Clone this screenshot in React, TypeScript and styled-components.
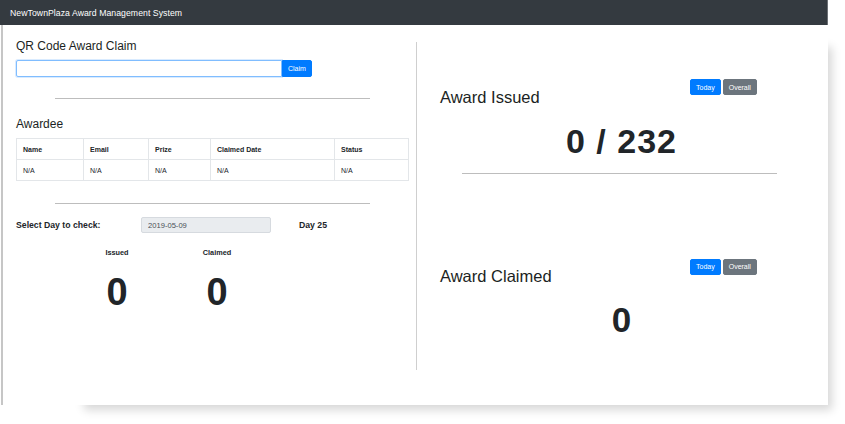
import styled, { createGlobalStyle } from "styled-components";

const GlobalStyle = createGlobalStyle`
  html, body {
    margin: 0;
    padding: 0;
    background: #ffffff;
  }
  body {
    font-family: "Liberation Sans", Arial, sans-serif;
    color: #212529;
  }
`;

const rows = [{ name: "N/A", email: "N/A", prize: "N/A", date: "N/A", status: "N/A" }];

const App = () => {
  return (
    <Stage>
      <GlobalStyle />
      <Backdrop />
      <Frame>
        <NavBar>NewTownPlaza Award Management System</NavBar>
        <Body>
          <LeftColumn>
            <SectionTitle>QR Code Award Claim</SectionTitle>
            <ClaimGroup>
              <ClaimInput type="text" />
              <PrimaryButton $size="md">Claim</PrimaryButton>
            </ClaimGroup>
            <Rule $top={21} />
            <SectionTitle $top={18}>Awardee</SectionTitle>
            <Table>
              <thead>
                <tr>
                  <Th $w={67}>Name</Th>
                  <Th $w={65}>Email</Th>
                  <Th $w={62}>Prize</Th>
                  <Th $w={124}>Claimed Date</Th>
                  <Th>Status</Th>
                </tr>
              </thead>
              <tbody>
                {rows.map((r, i) => (
                  <tr key={i}>
                    <Td>{r.name}</Td>
                    <Td>{r.email}</Td>
                    <Td>{r.prize}</Td>
                    <Td>{r.date}</Td>
                    <Td>{r.status}</Td>
                  </tr>
                ))}
              </tbody>
            </Table>
            <Rule $top={22} />
            <DayRow>
              <DayLabel>Select Day to check:</DayLabel>
              <DateField>2019-05-09</DateField>
              <DayLabel $indent={28}>Day 25</DayLabel>
            </DayRow>
            <StatGrid>
              <Stat>
                <StatLabel>Issued</StatLabel>
                <StatValue>0</StatValue>
              </Stat>
              <Stat>
                <StatLabel>Claimed</StatLabel>
                <StatValue>0</StatValue>
              </Stat>
            </StatGrid>
          </LeftColumn>
          <RightColumn>
            <CardHeader $top={37}>
              <BigTitle>Award Issued</BigTitle>
              <ToggleGroup>
                <PrimaryButton $size="sm">Today</PrimaryButton>
                <SecondaryButton>Overall</SecondaryButton>
              </ToggleGroup>
            </CardHeader>
            <BigNumber $size={34} $spacing={1} $top={17}>0 / 232</BigNumber>
            <WideRule />
            <CardHeader $top={85}>
              <BigTitle>Award Claimed</BigTitle>
              <ToggleGroup>
                <PrimaryButton $size="sm">Today</PrimaryButton>
                <SecondaryButton>Overall</SecondaryButton>
              </ToggleGroup>
            </CardHeader>
            <BigNumber $size={35} $spacing={0} $top={16}>0</BigNumber>
          </RightColumn>
        </Body>
      </Frame>
    </Stage>
  );
};

export default App;

const Stage = styled.div`
  position: relative;
  width: 845px;
  height: 424px;
  overflow: hidden;
`;

const Backdrop = styled.div`
  position: absolute;
  left: 80px;
  top: 42px;
  width: 748px;
  height: 363px;
  background: #ffffff;
  box-shadow: 4px 5px 9px rgba(0, 0, 0, 0.16);
`;

const Frame = styled.div`
  position: relative;
  z-index: 1;
  width: 828px;
  height: 405px;
  background: #ffffff;
  display: flex;
  flex-direction: column;
`;

const NavBar = styled.div`
  height: 25px;
  flex-shrink: 0;
  box-sizing: border-box;
  padding: 0 10px;
  display: flex;
  align-items: center;
  background: #343a40;
  border-right: 1px solid #6c7075;
  color: #ffffff;
  font-size: 8.7px;
  letter-spacing: 0.05px;
`;

const Body = styled.div`
  flex: 1;
  display: flex;
  margin-left: 1px;
  border-left: 2px solid #c6c6c6;
`;

const LeftColumn = styled.div`
  width: 413px;
  box-sizing: border-box;
  padding: 14px 7px 0 13px;
  display: flex;
  flex-direction: column;
`;

const RightColumn = styled.div`
  width: 411px;
  height: 328px;
  margin-top: 17px;
  box-sizing: border-box;
  padding: 0 24px 0 23px;
  border-left: 1px solid #cfcfcf;
  display: flex;
  flex-direction: column;
`;

const SectionTitle = styled.h4<{ $top?: number }>`
  margin: ${(p) => p.$top ?? 0}px 0 0;
  font-size: 12px;
  line-height: 15px;
  font-weight: 400;
  color: #1b1f23;
`;

const ClaimGroup = styled.div`
  display: flex;
  margin-top: 6px;
  height: 17px;
`;

const ClaimInput = styled.input`
  width: 266px;
  height: 17px;
  box-sizing: border-box;
  margin: 0;
  border: 1px solid #80bdff;
  border-radius: 2px 0 0 2px;
  box-shadow: 0 0 0 1px rgba(0, 123, 255, 0.15);
  outline: none;
  background: #ffffff;
`;

const PrimaryButton = styled.button<{ $size: "sm" | "md" }>`
  height: ${(p) => (p.$size === "md" ? 17 : 16)}px;
  box-sizing: border-box;
  margin: 0;
  padding: 0 5px;
  border: 1px solid #007bff;
  border-radius: ${(p) => (p.$size === "md" ? "0 2px 2px 0" : "2px")};
  background: #007bff;
  color: #ffffff;
  font-family: "Liberation Sans", Arial, sans-serif;
  font-size: 7px;
  line-height: 1;
`;

const SecondaryButton = styled.button`
  height: 16px;
  box-sizing: border-box;
  margin: 0;
  padding: 0 5px;
  border: 1px solid #6c757d;
  border-radius: 2px;
  background: #6c757d;
  color: #ffffff;
  font-family: "Liberation Sans", Arial, sans-serif;
  font-size: 7px;
  line-height: 1;
`;

const Rule = styled.div<{ $top: number }>`
  width: 315px;
  height: 1px;
  margin: ${(p) => p.$top}px 0 0 39px;
  background: #bdbdbd;
`;

const Table = styled.table`
  width: 393px;
  margin-top: 6px;
  border-collapse: collapse;
  font-size: 7px;
  color: #212529;
  table-layout: fixed;
`;

const Th = styled.th<{ $w?: number }>`
  width: ${(p) => (p.$w ? `${p.$w}px` : "auto")};
  height: 21px;
  box-sizing: border-box;
  padding: 0 6px;
  border: 1px solid #e3e6e9;
  text-align: left;
  font-weight: 700;
`;

const Td = styled.td`
  height: 21px;
  box-sizing: border-box;
  padding: 0 6px;
  border: 1px solid #e3e6e9;
  text-align: left;
`;

const DayRow = styled.div`
  display: grid;
  grid-template-columns: 125px 130px auto;
  align-items: center;
  margin-top: 13px;
`;

const DayLabel = styled.span<{ $indent?: number }>`
  margin-left: ${(p) => p.$indent ?? 0}px;
  font-size: 8.7px;
  font-weight: 700;
  color: #212529;
`;

const DateField = styled.div`
  height: 16px;
  box-sizing: border-box;
  padding: 0 6px;
  display: flex;
  align-items: center;
  background: #e9ecef;
  border: 1px solid #d6dadf;
  border-radius: 2px;
  font-size: 7.6px;
  color: #495057;
`;

const StatGrid = styled.div`
  display: grid;
  grid-template-columns: 100px 100px;
  margin: 15px 0 0 51px;
`;

const Stat = styled.div`
  display: flex;
  flex-direction: column;
  align-items: center;
`;

const StatLabel = styled.div`
  font-size: 7.3px;
  line-height: 9px;
  font-weight: 700;
`;

const StatValue = styled.div`
  margin-top: 15.5px;
  font-size: 38px;
  line-height: 1;
  font-weight: 700;
`;

const CardHeader = styled.div<{ $top: number }>`
  display: grid;
  grid-template-columns: 250px auto;
  align-items: start;
  margin-top: ${(p) => p.$top}px;
`;

const BigTitle = styled.h3`
  margin: 7.5px 0 0;
  font-size: 16.5px;
  line-height: 20px;
  font-weight: 400;
  color: #1b1f23;
`;

const ToggleGroup = styled.div`
  display: flex;
  gap: 2px;
`;

const BigNumber = styled.div<{ $size: number; $spacing: number; $top: number }>`
  margin-top: ${(p) => p.$top}px;
  font-size: ${(p) => p.$size}px;
  line-height: 1;
  font-weight: 700;
  text-align: center;
  letter-spacing: ${(p) => p.$spacing}px;
  color: #212529;
`;

const WideRule = styled.div`
  width: 315px;
  height: 1px;
  margin: 15px 0 0 22px;
  background: #bdbdbd;
`;
